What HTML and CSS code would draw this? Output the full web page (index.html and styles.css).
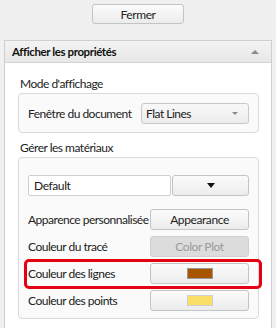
FILE: index.html
```html
<!DOCTYPE html>
<html>
<head>
<meta name="viewport" content="width=device-width, initial-scale=1">
<link rel="stylesheet" href="styles.css">
</head>
<body>

<div class="topbar">
  <button type="button" class="btn closebtn">Fermer</button>
</div>

<div class="panel">
  <div class="panel-head">
    <span>Afficher les propriétés</span>
    <span class="head-arrow"></span>
  </div>

  <div class="panel-body">
    <div class="section-label">Mode d'affichage</div>
    <div class="group group-mode">
      <span class="row-label">Fenêtre du document</span>
      <div class="combo">
        <span>Flat Lines</span>
        <span class="combo-arrow"></span>
      </div>
    </div>

    <div class="section-label">Gérer les matériaux</div>
    <div class="group group-mat">
      <div class="mat-select">
        <input type="text" class="mat-input" value="Default">
        <button type="button" class="btn mat-drop"><span class="drop-arrow"></span></button>
      </div>

      <div class="row">
        <span class="row-label">Apparence personnalisée</span>
        <button type="button" class="btn rowbtn">Appearance</button>
      </div>
      <div class="row">
        <span class="row-label">Couleur du tracé</span>
        <button type="button" class="btn rowbtn" disabled>Color Plot</button>
      </div>
      <div class="row">
        <span class="row-label">Couleur des lignes</span>
        <button type="button" class="btn rowbtn"><span class="swatch swatch-lines"></span></button>
      </div>
      <div class="row">
        <span class="row-label">Couleur des points</span>
        <button type="button" class="btn rowbtn"><span class="swatch swatch-points"></span></button>
      </div>

      <div class="highlight"></div>
    </div>
  </div>
</div>

</body>
</html>
```

FILE: styles.css
```css
* {
  box-sizing: border-box;
}

body {
  margin: 0;
  background: #f0f0f0;
  font-family: Lato, "Liberation Sans", sans-serif;
  font-size: 12px;
  letter-spacing: -0.5px;
  color: #222;
  height: 328px;
  overflow: hidden;
  white-space: nowrap;
}

.btn {
  font-family: inherit;
  font-size: 12px;
  letter-spacing: -0.4px;
  color: #222;
  background: linear-gradient(#fbfbfb, #ececec);
  border: 1px solid #c4c4c4;
  border-radius: 3px;
  padding: 0;
  display: flex;
  align-items: center;
  justify-content: center;
}

.btn:disabled {
  background: #dcdcdc;
  color: #9a9a9a;
  border-color: #d0d0d0;
}

.topbar {
  height: 40px;
  padding-top: 4px;
  display: flex;
  justify-content: center;
}

.closebtn {
  width: 92px;
  height: 20px;
}

.panel {
  margin-left: 4px;
  width: 268px;
  height: 288px;
  border: 1px solid #cfcfcf;
  border-bottom: none;
  background: #fff;
}

.panel-head {
  height: 22px;
  padding: 0 12px 0 7px;
  background: linear-gradient(#f3f3f3, #e8e8e8);
  border-bottom: 1px solid #d2d2d2;
  display: flex;
  align-items: center;
  justify-content: space-between;
  font-weight: bold;
  font-size: 11.5px;
  letter-spacing: -0.4px;
  color: #111;
}

.head-arrow {
  width: 0;
  height: 0;
  border-left: 4px solid transparent;
  border-right: 4px solid transparent;
  border-bottom: 4px solid #8a8a8a;
}

.panel-body {
  padding: 13px 0 0 13px;
}

.section-label {
  height: 16px;
  line-height: 16px;
  padding-left: 2px;
  margin-bottom: 1px;
}

.group {
  width: 241px;
  border: 1px solid #d9d9d9;
  border-radius: 4px;
  background: #fafafa;
}

.group-mode {
  height: 40px;
  display: flex;
  align-items: center;
  padding-left: 9px;
  margin-bottom: 7px;
}

.group-mode .row-label {
  width: 113px;
}

.combo {
  width: 108px;
  height: 21px;
  border: 1px solid #c8c8c8;
  border-radius: 3px;
  background: linear-gradient(#f8f8f8, #ececec);
  display: flex;
  align-items: center;
  justify-content: space-between;
  padding: 0 10px 0 4px;
}

.combo-arrow {
  width: 0;
  height: 0;
  border-left: 3px solid transparent;
  border-right: 3px solid transparent;
  border-top: 3px solid #8a8a8a;
}

.group-mat {
  position: relative;
  height: 162px;
  padding: 17px 9px 0 9px;
}

.mat-select {
  display: flex;
  gap: 1px;
  margin-bottom: 13px;
}

.mat-input {
  width: 143px;
  height: 21px;
  border: 1px solid #cfcfcf;
  border-radius: 2px;
  background: #fff;
  font-family: inherit;
  font-size: 12px;
  letter-spacing: -0.4px;
  color: #222;
  padding: 0 5px;
}

.mat-drop {
  width: 77px;
  height: 21px;
}

.drop-arrow {
  width: 0;
  height: 0;
  border-left: 4px solid transparent;
  border-right: 4px solid transparent;
  border-top: 5px solid #111;
}

.row {
  display: flex;
  align-items: center;
  justify-content: space-between;
  height: 21px;
  margin-bottom: 6px;
}

.rowbtn {
  width: 99px;
  height: 21px;
}

.swatch {
  width: 26px;
  height: 11px;
  border: 1px solid #9a9a9a;
}

.swatch-lines {
  background: #a85500;
}

.swatch-points {
  background: #fae067;
  border-color: #cfcfcf;
}

.highlight {
  position: absolute;
  left: 5px;
  top: 101px;
  width: 238px;
  height: 30px;
  border: 3px solid #e60012;
  border-radius: 5px;
}
```
